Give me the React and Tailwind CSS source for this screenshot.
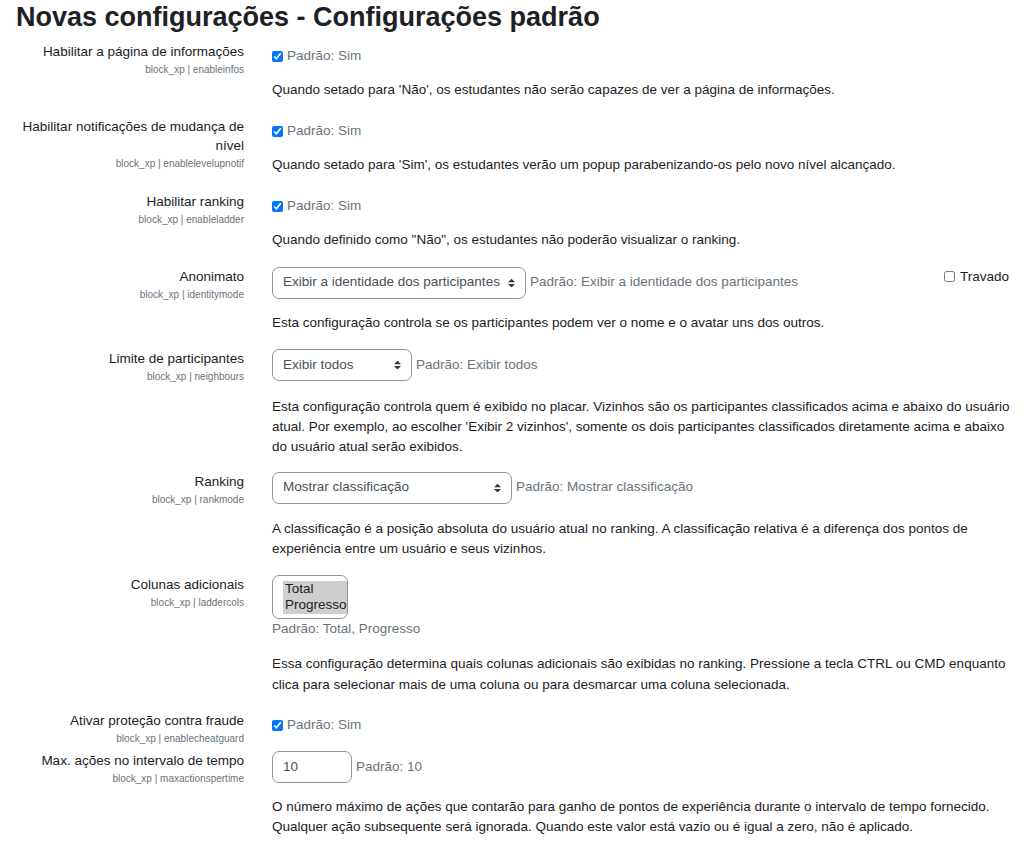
import React from "react";

function Row({ title, short, children, className }) {
  return (
    <div className={`flex ${className}`}>
      <div className="w-[228px] shrink-0 text-right">
        <div className="leading-[19px]">{title}</div>
        <div className="text-[10px] leading-[18px] text-[#6a737b]">{short}</div>
      </div>
      <div className="ml-[28px] min-w-0 flex-1">{children}</div>
    </div>
  );
}

function CheckDefault() {
  return (
    <div className="flex items-center pt-[4.5px]">
      <input type="checkbox" defaultChecked className="m-0 h-[11px] w-[11px]" />
      <span className="ml-[4px] text-[#6a737b]">Padrão: Sim</span>
    </div>
  );
}

function Arrow() {
  return (
    <svg
      className="absolute right-[10px] top-1/2 -translate-y-1/2"
      width="7"
      height="9"
      viewBox="0 0 4 5"
    >
      <path d="M2 0L0 2h4zm0 5L0 3h4z" fill="#343a40" />
    </svg>
  );
}

function Select({ className, text }) {
  return (
    <div
      className={`relative flex h-[32px] shrink-0 items-center rounded-[7px] border border-[#8f959e] bg-white pl-[10px] text-[#495057] ${className}`}
    >
      <span className="whitespace-nowrap">{text}</span>
      <Arrow />
    </div>
  );
}

function Desc({ children, className = "mt-[14px]" }) {
  return <p className={`-mr-[8px] ${className}`}>{children}</p>;
}

export default function App() {
  return (
    <div className="min-h-[852px] bg-white px-[16px] font-['Liberation_Sans',Arial,sans-serif] text-[13.5px] leading-[20.25px] text-[#1d2125]">
      <h2 className="mb-[8.5px] pt-[1px] text-[27px] font-bold leading-[32px]">
        Novas configurações - Configurações padrão
      </h2>

      <Row title="Habilitar a página de informações" short="block_xp | enableinfos" className="mb-[16px]">
        <CheckDefault />
        <Desc>Quando setado para 'Não', os estudantes não serão capazes de ver a página de informações.</Desc>
      </Row>

      <Row
        title="Habilitar notificações de mudança de nível"
        short="block_xp | enablelevelupnotif"
        className="mb-[16px]"
      >
        <CheckDefault />
        <Desc>Quando setado para 'Sim', os estudantes verão um popup parabenizando-os pelo novo nível alcançado.</Desc>
      </Row>

      <Row title="Habilitar ranking" short="block_xp | enableladder" className="mb-[16px]">
        <CheckDefault />
        <Desc>Quando definido como "Não", os estudantes não poderão visualizar o ranking.</Desc>
      </Row>

      <Row title="Anonimato" short="block_xp | identitymode" className="mb-[16px]">
        <div className="flex items-center">
          <Select className="w-[254px]" text="Exibir a identidade dos participantes" />
          <span className="ml-[4px] text-[#6a737b]">Padrão: Exibir a identidade dos participantes</span>
          <label className="ml-auto flex items-center self-start leading-[20px]">
            <input type="checkbox" className="m-0 h-[11px] w-[11px]" />
            <span className="ml-[5px]">Travado</span>
          </label>
        </div>
        <Desc>Esta configuração controla se os participantes podem ver o nome e o avatar uns dos outros.</Desc>
      </Row>

      <Row title="Limite de participantes" short="block_xp | neighbours" className="mb-[14px]">
        <div className="flex items-center">
          <Select className="w-[140px]" text="Exibir todos" />
          <span className="ml-[4px] text-[#6a737b]">Padrão: Exibir todos</span>
        </div>
        <Desc className="mt-[16px]">
          Esta configuração controla quem é exibido no placar. Vizinhos são os participantes classificados acima e
          abaixo do usuário atual. Por exemplo, ao escolher 'Exibir 2 vizinhos', somente os dois participantes
          classificados diretamente acima e abaixo do usuário atual serão exibidos.
        </Desc>
      </Row>

      <Row title="Ranking" short="block_xp | rankmode" className="mb-[16px]">
        <div className="flex items-center">
          <Select className="w-[240px]" text="Mostrar classificação" />
          <span className="ml-[4px] text-[#6a737b]">Padrão: Mostrar classificação</span>
        </div>
        <Desc className="mt-[15px]">
          A classificação é a posição absoluta do usuário atual no ranking. A classificação relativa é a diferença dos
          pontos de experiência entre um usuário e seus vizinhos.
        </Desc>
      </Row>

      <Row title="Colunas adicionais" short="block_xp | laddercols" className="mb-[16px]">
        <div className="h-[44px] w-[76px] overflow-hidden rounded-[7px] border border-[#8f959e] bg-white pl-[10px] pt-[4.5px]">
          <div className="whitespace-nowrap bg-[#cecece] pl-[2px] leading-[16.5px]">Total</div>
          <div className="whitespace-nowrap bg-[#cecece] pl-[2px] leading-[16.5px]">Progresso</div>
        </div>
        <div className="text-[#6a737b]">Padrão: Total, Progresso</div>
        <Desc className="mt-[15px]">
          Essa configuração determina quais colunas adicionais são exibidas no ranking. Pressione a tecla CTRL ou CMD
          enquanto clica para selecionar mais de uma coluna ou para desmarcar uma coluna selecionada.
        </Desc>
      </Row>

      <Row title="Ativar proteção contra fraude" short="block_xp | enablecheatguard" className="mb-[3px]">
        <CheckDefault />
      </Row>

      <Row title="Max. ações no intervalo de tempo" short="block_xp | maxactionspertime" className="mb-[16px]">
        <div className="flex items-center">
          <div className="flex h-[32px] w-[80px] shrink-0 items-center rounded-[7px] border border-[#8f959e] bg-white pl-[10px] text-[#495057]">
            10
          </div>
          <span className="ml-[4px] text-[#6a737b]">Padrão: 10</span>
        </div>
        <Desc>
          O número máximo de ações que contarão para ganho de pontos de experiência durante o intervalo de tempo
          fornecido. Qualquer ação subsequente será ignorada. Quando este valor está vazio ou é igual a zero, não é
          aplicado.
        </Desc>
      </Row>
    </div>
  );
}
